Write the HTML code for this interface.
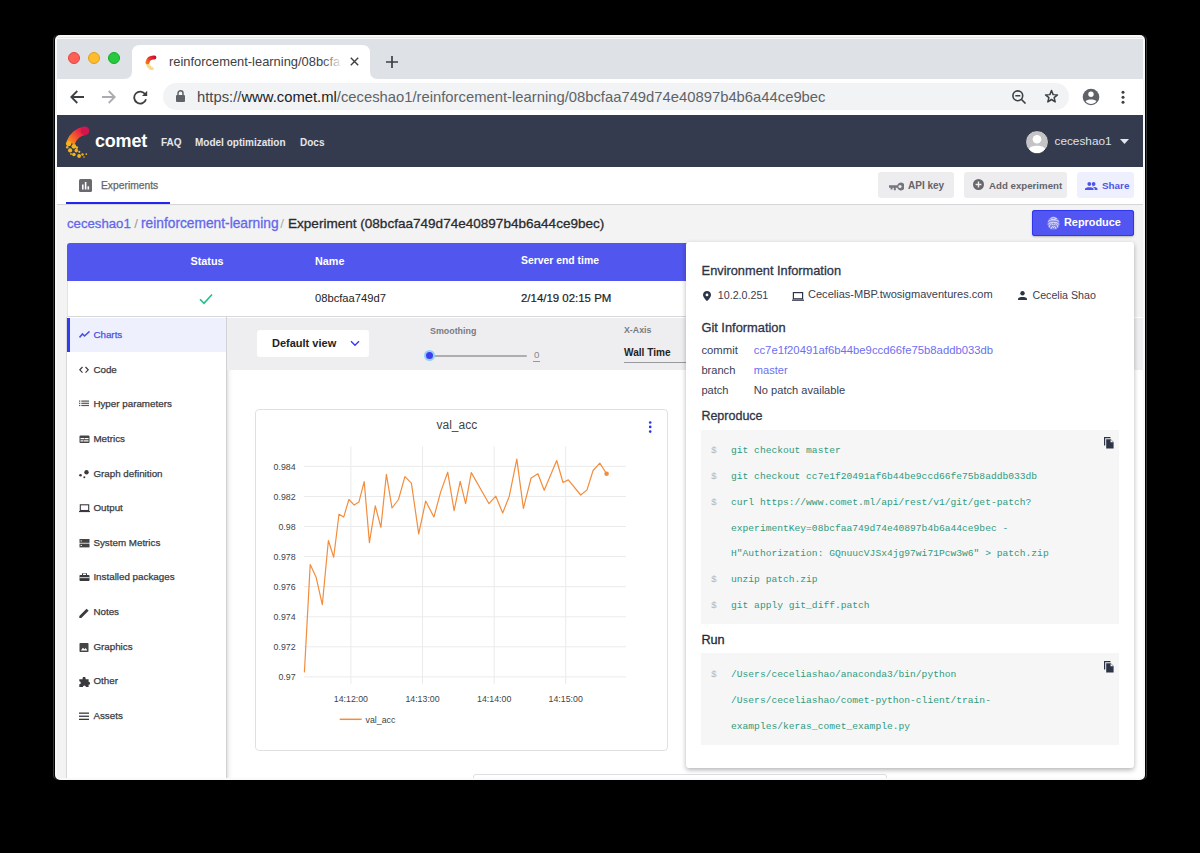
<!DOCTYPE html>
<html><head><meta charset="utf-8">
<style>
*{margin:0;padding:0;box-sizing:border-box}
html,body{width:1200px;height:853px;background:#000;overflow:hidden;font-family:"Liberation Sans",sans-serif}
.a{position:absolute}
#win{position:absolute;left:55px;top:35px;width:1090px;height:745px;border-radius:5px;overflow:hidden;background:#f3f3f4;border:2px solid #f8f9fa;box-shadow:-1px 0 0 0 #000,-2px 0 0 0 #363636,1px 0 0 0 #000,2px 0 0 0 #363636}
#pg{position:absolute;left:-57px;top:-37px;width:1200px;height:853px}
.t{position:absolute;white-space:nowrap;line-height:1}
</style></head>
<body>
<div id="win"><div id="pg">
  <!-- tab strip -->
  <div class="a" style="left:55px;top:35px;width:1090px;height:44px;background:#dee1e6"></div>
  <div class="a" style="left:55px;top:37px;width:1090px;height:2px;background:linear-gradient(#e6e6e6 0 50%,#fafafa 50%)"></div>
  <div class="a" style="left:68px;top:52px;width:12px;height:12px;border-radius:50%;background:#fe5f57;border:.5px solid #e2463f"></div>
  <div class="a" style="left:88px;top:52px;width:12px;height:12px;border-radius:50%;background:#febc2e;border:.5px solid #e1a116"></div>
  <div class="a" style="left:108px;top:52px;width:12px;height:12px;border-radius:50%;background:#28c840;border:.5px solid #14ae2a"></div>
  <svg class="a" style="left:124px;top:45px" width="254" height="34" viewBox="0 0 254 34"><path d="M0 34 Q8 34 8 26 L8 8 Q8 0 16 0 L238 0 Q246 0 246 8 L246 26 Q246 34 254 34 Z" fill="#fff"/></svg>
  <svg class="a" style="left:143px;top:53px" width="16" height="17" viewBox="0 0 16 17">
    <defs><linearGradient id="fg" gradientUnits="userSpaceOnUse" x1="12" y1="4" x2="4" y2="9"><stop offset="0" stop-color="#c8102e"/><stop offset=".5" stop-color="#ee2b2e"/><stop offset="1" stop-color="#f4721e"/></linearGradient></defs>
    <path d="M4.3 9.5 C5 14 7 15 9 15.8" stroke="#f8d67a" stroke-width="3.4" fill="none" stroke-linecap="round" opacity=".9"/>
    <circle cx="4.6" cy="9.6" r="1.4" fill="#f2ad1c"/>
    <path d="M11.4 4.5 C8 4.3 5.2 6 4.5 9.3" stroke="url(#fg)" stroke-width="4" fill="none" stroke-linecap="round"/>
  </svg>
  <div class="t" style="left:169px;top:55.9px;font-size:12.9px;color:#3c4043">reinforcement-learning/08bcfa</div>
  <div class="a" style="left:322px;top:50px;width:26px;height:22px;background:linear-gradient(90deg,rgba(255,255,255,0),#fff 80%)"></div>
  <svg class="a" style="left:350px;top:57px" width="9" height="9" viewBox="0 0 9 9"><path d="M.8 .8 L8.2 8.2 M8.2 .8 L.8 8.2" stroke="#3c4043" stroke-width="1.4"/></svg>
  <svg class="a" style="left:386px;top:56px" width="12" height="12" viewBox="0 0 12 12"><path d="M6 0 V12 M0 6 H12" stroke="#3c4043" stroke-width="1.7"/></svg>
  <!-- toolbar -->
  <div class="a" style="left:55px;top:79px;width:1090px;height:36px;background:#fff"></div>
  <svg class="a" style="left:70px;top:90px" width="14" height="14" viewBox="0 0 14 14"><path d="M14 7 H1.5 M7.3 1 L1.3 7 L7.3 13" stroke="#3c4043" stroke-width="1.8" fill="none"/></svg>
  <svg class="a" style="left:102px;top:90px" width="14" height="14" viewBox="0 0 14 14"><path d="M0 7 H12.5 M6.7 1 L12.7 7 L6.7 13" stroke="#a9acb0" stroke-width="1.8" fill="none"/></svg>
  <svg class="a" style="left:133px;top:90px" width="15" height="15" viewBox="0 0 15 15"><path d="M12.2 4.2 A6 6 0 1 0 13 9.2" stroke="#3c4043" stroke-width="1.8" fill="none"/><path d="M14.2 0.8 V6 H9 Z" fill="#3c4043"/></svg>
  <div class="a" style="left:163px;top:83px;width:906px;height:27px;background:#f1f3f4;border-radius:14px"></div>
  <svg class="a" style="left:176px;top:90px" width="9" height="12" viewBox="0 0 9 12"><path d="M2 5 V3.3 A2.5 2.5 0 0 1 7 3.3 V5" stroke="#5f6368" stroke-width="1.5" fill="none"/><rect x="0" y="5" width="9" height="7" rx="1" fill="#5f6368"/></svg>
  <div class="t" style="left:197px;top:90px;font-size:14.8px;color:#5f6368"><span style="color:#45494e">https://</span><span style="color:#202124">www.comet.ml</span>/ceceshao1/reinforcement-learning/08bcfaa749d74e40897b4b6a44ce9bec</div>
  <svg class="a" style="left:1012px;top:90px" width="15" height="14" viewBox="0 0 15 14"><circle cx="5.8" cy="5.8" r="4.9" stroke="#3c4043" stroke-width="1.6" fill="none"/><path d="M3.3 5.8 H8.3 M9.3 9.3 L13.5 13.5" stroke="#3c4043" stroke-width="1.6"/></svg>
  <svg class="a" style="left:1044px;top:89px" width="15" height="15" viewBox="0 0 24 24"><path d="M12 2.5 L14.6 9 L21.5 9.4 L16.2 13.8 L17.9 20.6 L12 16.8 L6.1 20.6 L7.8 13.8 L2.5 9.4 L9.4 9 Z" stroke="#3c4043" stroke-width="2.4" fill="none" stroke-linejoin="round"/></svg>
  <svg class="a" style="left:1082px;top:88px" width="18" height="18" viewBox="0 0 18 18"><circle cx="9" cy="9" r="8.3" fill="#5f6368"/><circle cx="9" cy="6.3" r="2.7" fill="#fff"/><path d="M3.6 13.2 C5 10.8 13 10.8 14.4 13.2 C13 15 11 16 9 16 C7 16 5 15 3.6 13.2Z" fill="#fff"/></svg>
  <svg class="a" style="left:1120px;top:90px" width="6" height="15" viewBox="0 0 6 15"><circle cx="3" cy="2.3" r="1.5" fill="#3c4043"/><circle cx="3" cy="7.2" r="1.5" fill="#3c4043"/><circle cx="3" cy="12.3" r="1.5" fill="#3c4043"/></svg>
  <!-- comet nav -->
  <div class="a" style="left:55px;top:115px;width:1090px;height:52px;background:#343b4e"></div>
  <svg class="a" style="left:64px;top:124px" width="30" height="36" viewBox="0 0 30 36">
    <defs><linearGradient id="lg" gradientUnits="userSpaceOnUse" x1="24" y1="5" x2="6" y2="20"><stop offset="0" stop-color="#d3154e"/><stop offset=".35" stop-color="#ee2741"/><stop offset=".75" stop-color="#f46a26"/><stop offset="1" stop-color="#f7951d"/></linearGradient></defs>
    <path d="M21 6.7 A18.5 18.5 0 0 0 6.6 19" stroke="url(#lg)" stroke-width="8.6" fill="none"/>
    <circle cx="21" cy="6.7" r="4.3" fill="#d3154e"/>
    <g fill="#f5b21c"><circle cx="4.6" cy="19.6" r="2.6"/><circle cx="9.9" cy="22.3" r="2.4"/><circle cx="6.1" cy="26.4" r="2.1"/><circle cx="3.2" cy="23.2" r="1.2"/><circle cx="12.3" cy="26.6" r="1.8"/><circle cx="12.8" cy="23.6" r="1.3"/><circle cx="9.9" cy="30.5" r="1.8"/><circle cx="15.1" cy="32" r="1.9"/><circle cx="15.3" cy="27.8" r="1.1"/><circle cx="18.5" cy="30.5" r="1.2"/><circle cx="22.3" cy="30.1" r="0.9"/><circle cx="7" cy="30" r="0.9"/><circle cx="20" cy="33" r="0.8"/></g>
  </svg>
  <div class="t" style="left:95px;top:132px;font-size:18px;font-weight:bold;color:#fff;letter-spacing:-0.2px">comet</div>
  <div class="t" style="left:161px;top:138px;font-size:10px;font-weight:bold;color:#e4e6ec">FAQ</div>
  <div class="t" style="left:195px;top:138px;font-size:10px;font-weight:bold;color:#e4e6ec">Model optimization</div>
  <div class="t" style="left:300px;top:138px;font-size:10px;font-weight:bold;color:#e4e6ec">Docs</div>
  <svg class="a" style="left:1025px;top:129.5px" width="24" height="24" viewBox="0 0 24 24"><circle cx="12" cy="12" r="11.5" fill="#c4c4c6" stroke="#262c3c" stroke-width="1"/><circle cx="12" cy="9.3" r="4.3" fill="#fff"/><path d="M4 19 C5 14.5 19 14.5 20 19 C18 22 15 23.3 12 23.3 C9 23.3 6 22 4 19Z" fill="#fff"/></svg>
  <div class="t" style="left:1054.5px;top:135.8px;font-size:11.8px;color:#dfe1e8">ceceshao1</div>
  <svg class="a" style="left:1120px;top:139px" width="9" height="5" viewBox="0 0 9 5"><path d="M0 0 H9 L4.5 5Z" fill="#e4e6ec"/></svg>
  <!-- tabs row -->
  <div class="a" style="left:55px;top:167px;width:1090px;height:38px;background:#fff;border-bottom:1px solid #d6d6d8"></div>
  <div class="a" style="left:66px;top:202px;width:104px;height:2px;background:#2525f0"></div>
  <svg class="a" style="left:79px;top:179px" width="13" height="13" viewBox="0 0 13 13"><rect width="13" height="13" rx="1.5" fill="#6a6a6e"/><rect x="3" y="5.5" width="1.6" height="5" fill="#fff"/><rect x="5.8" y="3" width="1.6" height="7.5" fill="#fff"/><rect x="8.5" y="7.3" width="1.6" height="3.2" fill="#fff"/></svg>
  <div class="t" style="left:101px;top:181px;font-size:10.3px;color:#66666a;-webkit-text-stroke:0.25px #66666a">Experiments</div>
  <!-- buttons -->
  <div class="a" style="left:878px;top:172px;width:76px;height:26px;background:#ededf0;border-radius:3px"></div>
  <svg class="a" style="left:888.5px;top:181.5px" width="15" height="9" viewBox="0 0 15 9"><path d="M0 3.2 H8.2 A3.9 3.9 0 1 1 8.2 5.8 H6.8 V8.3 H4.8 V5.8 H3.5 V7.5 H1.6 V5.8 H0Z" fill="#76767e"/><circle cx="11" cy="4.5" r="1.6" fill="#ededf0"/></svg>
  <div class="t" style="left:908px;top:181.1px;font-size:10px;font-weight:bold;color:#646469">API key</div>
  <div class="a" style="left:964px;top:172px;width:103px;height:26px;background:#ededf0;border-radius:3px"></div>
  <svg class="a" style="left:973px;top:179px" width="11" height="11" viewBox="0 0 11 11"><circle cx="5.5" cy="5.5" r="5.5" fill="#67676c"/><path d="M5.5 2.6 V8.4 M2.6 5.5 H8.4" stroke="#ededf0" stroke-width="1.4"/></svg>
  <div class="t" style="left:989px;top:181.1px;font-size:9.7px;font-weight:bold;color:#646469">Add experiment</div>
  <div class="a" style="left:1077px;top:172px;width:57px;height:26px;background:#eef0fe;border-radius:3px"></div>
  <svg class="a" style="left:1085px;top:181.5px" width="12.5" height="8" viewBox="0 0 12.5 8"><circle cx="4.3" cy="2" r="1.9" fill="#4e55e6"/><circle cx="8.6" cy="2" r="1.9" fill="#4e55e6"/><path d="M0 8 V6.8 C0 4.6 8.6 4.6 8.6 6.8 V8Z M6.8 4.7 C9 4.4 12.5 5.2 12.5 6.8 V8 H9.6 V6.8 C9.6 6 9 5.2 6.8 4.7Z" fill="#4e55e6"/></svg>
  <div class="t" style="left:1102px;top:181px;font-size:9.9px;font-weight:bold;color:#4e55e6">Share</div>
  <div class="a" style="left:1032px;top:210px;width:102px;height:26px;background:#5156f2;border-radius:3px;box-shadow:inset 0 0 0 1px #3035f0,0 1px 2px rgba(0,0,0,.25)"></div>
  <svg class="a" style="left:1046.5px;top:215.5px" width="13" height="14" viewBox="0 0 13 14"><ellipse cx="6.5" cy="7.2" rx="6" ry="6.6" fill="#a9acf8" opacity=".55"/><g stroke="#e2e3fd" stroke-width="1" fill="none" stroke-linecap="round">
<ellipse cx="6.5" cy="2.6" rx="2.6" ry="1"/>
<path d="M1.5 5.2 C3.5 3.3 9.5 3.3 11.5 5.2"/>
<path d="M1.2 8.2 C2 5.5 11 5.5 11.8 8.2"/>
<path d="M2.2 11 C2.5 7.5 5 7 6.5 9 C8 7 10.5 7.5 10.8 11"/>
<path d="M4 12.8 C4.5 10 6 9.5 6.5 12 C7 9.5 8.5 10 9 12.8"/></g></svg>
  <div class="t" style="left:1064px;top:216.9px;font-size:10.9px;font-weight:bold;color:#fff">Reproduce</div>
  <!-- breadcrumb -->
  <div class="t" style="left:67px;top:217.4px;font-size:13.2px;color:#6467ea;-webkit-text-stroke:0.3px #6467ea">ceceshao1</div>
  <div class="t" style="left:134.3px;top:217.3px;font-size:13.3px;color:#999">/</div>
  <div class="t" style="left:141px;top:216.9px;font-size:13.75px;color:#6467ea;-webkit-text-stroke:0.3px #6467ea">reinforcement-learning</div>
  <div class="t" style="left:280.3px;top:217.3px;font-size:13.3px;color:#aaa">/</div>
  <div class="t" style="left:288px;top:217.1px;font-size:13.55px;color:#2b2b2b;-webkit-text-stroke:0.3px #2b2b2b">Experiment (08bcfaa749d74e40897b4b6a44ce9bec)</div>
  <!-- table -->
  <div class="a" style="left:67px;top:243px;width:1067px;height:38px;background:#5156ef;border-radius:3px 3px 0 0"></div>
  <div class="t" style="left:190.5px;top:256.1px;font-size:10.8px;font-weight:bold;color:#fff">Status</div>
  <div class="t" style="left:315px;top:256.1px;font-size:10.8px;font-weight:bold;color:#fff">Name</div>
  <div class="t" style="left:521px;top:256.3px;font-size:10.4px;font-weight:bold;color:#fff">Server end time</div>
  <div class="a" style="left:67px;top:281px;width:1067px;height:36px;background:#fff;border-left:1px solid #e2e2e4;border-bottom:1px solid #d8d8da"></div>
  <svg class="a" style="left:199px;top:293px" width="14" height="12" viewBox="0 0 14 12"><path d="M1 6.3 L5 10.3 L13 1.5" stroke="#20c08c" stroke-width="1.6" fill="none"/></svg>
  <div class="t" style="left:315px;top:293.3px;font-size:11.2px;color:#222">08bcfaa749d7</div>
  <div class="t" style="left:521px;top:293.2px;font-size:11.45px;color:#222;-webkit-text-stroke:0.2px #222">2/14/19 02:15 PM</div>
  <!-- sidebar -->
  <div class="a" style="left:66px;top:317px;width:161px;height:470px;background:#fff;border-left:1px solid #d8d8da;border-right:1px solid #d2d2d4"></div>
  <div class="a" style="left:67px;top:318px;width:159px;height:34px;background:#eef0fd"></div>
  <div class="a" style="left:67px;top:318px;width:3px;height:34px;background:#2f3cf0"></div>
  <svg class="a" style="left:79px;top:331.2px" width="12" height="11" viewBox="0 0 12 11"><path d="M0.5 6.5 L3.5 3 L5.5 5 L10.5 0.5" stroke="#4a52e8" stroke-width="1.6" fill="none"/></svg>
  <div class="t" style="left:93.4px;top:330.20px;font-size:9.8px;color:#4a52e8;-webkit-text-stroke:0.25px #4a52e8">Charts</div>
  <svg class="a" style="left:79px;top:365.8px" width="12" height="11" viewBox="0 0 12 11"><path d="M3.5 1 L0.8 3.8 L3.5 6.6 M6.5 1 L9.2 3.8 L6.5 6.6" stroke="#3a3a3e" stroke-width="1.2" fill="none"/></svg>
  <div class="t" style="left:93.4px;top:364.80px;font-size:9.8px;color:#3a3a3e;-webkit-text-stroke:0.25px #3a3a3e">Code</div>
  <svg class="a" style="left:79px;top:400.4px" width="12" height="11" viewBox="0 0 12 11"><g fill="#555"><rect x="0" y="0.5" width="1.3" height="1.2"/><rect x="0" y="2.7" width="1.3" height="1.2"/><rect x="0" y="4.9" width="1.3" height="1.2"/><rect x="2.3" y="0.5" width="7.7" height="1.2"/><rect x="2.3" y="2.7" width="7.7" height="1.2"/><rect x="2.3" y="4.9" width="7.7" height="1.2"/></g></svg>
  <div class="t" style="left:93.4px;top:399.40px;font-size:9.8px;color:#3a3a3e;-webkit-text-stroke:0.25px #3a3a3e">Hyper parameters</div>
  <svg class="a" style="left:79px;top:435.0px" width="12" height="11" viewBox="0 0 12 11"><rect x="0.5" y="0.5" width="10" height="7.5" rx="1" fill="#444"/><rect x="1.5" y="3" width="4" height="1.2" fill="#fff"/><rect x="6" y="3" width="3.5" height="1.2" fill="#fff"/><rect x="1.5" y="5.3" width="2.5" height="1.2" fill="#fff"/><rect x="4.5" y="5.3" width="5" height="1.2" fill="#fff"/></svg>
  <div class="t" style="left:93.4px;top:434.00px;font-size:9.8px;color:#3a3a3e;-webkit-text-stroke:0.25px #3a3a3e">Metrics</div>
  <svg class="a" style="left:79px;top:469.6px" width="12" height="11" viewBox="0 0 12 11"><circle cx="1.5" cy="5.2" r="1.3" fill="#3a3a3e"/><circle cx="7.5" cy="2.3" r="2.2" fill="#3a3a3e"/><circle cx="5.3" cy="7.2" r="1" fill="#3a3a3e"/></svg>
  <div class="t" style="left:93.4px;top:468.60px;font-size:9.8px;color:#3a3a3e;-webkit-text-stroke:0.25px #3a3a3e">Graph definition</div>
  <svg class="a" style="left:79px;top:504.2px" width="12" height="11" viewBox="0 0 12 11"><rect x="1.3" y="0.8" width="8.4" height="5.7" fill="none" stroke="#3a3a3e" stroke-width="1.1"/><rect x="0" y="7" width="11" height="1.1" fill="#3a3a3e"/></svg>
  <div class="t" style="left:93.4px;top:503.20px;font-size:9.8px;color:#3a3a3e;-webkit-text-stroke:0.25px #3a3a3e">Output</div>
  <svg class="a" style="left:79px;top:538.8px" width="12" height="11" viewBox="0 0 12 11"><rect x="0.5" y="0" width="10" height="3.8" fill="#444"/><rect x="0.5" y="4.6" width="10" height="3.8" fill="#444"/><rect x="1.6" y="1.4" width="1.2" height="1" fill="#fff"/><rect x="1.6" y="6" width="1.2" height="1" fill="#fff"/></svg>
  <div class="t" style="left:93.4px;top:537.80px;font-size:9.8px;color:#3a3a3e;-webkit-text-stroke:0.25px #3a3a3e">System Metrics</div>
  <svg class="a" style="left:79px;top:573.4px" width="12" height="11" viewBox="0 0 12 11"><rect x="0.5" y="2" width="10" height="6" rx="0.8" fill="#3a3a3e"/><rect x="3.5" y="0" width="4" height="2.5" rx="0.5" fill="none" stroke="#3a3a3e" stroke-width="1"/><rect x="0.5" y="4.3" width="10" height="0.8" fill="#fff"/></svg>
  <div class="t" style="left:93.4px;top:572.40px;font-size:9.8px;color:#3a3a3e;-webkit-text-stroke:0.25px #3a3a3e">Installed packages</div>
  <svg class="a" style="left:79px;top:608.0px" width="12" height="11" viewBox="0 0 12 11"><path d="M0.3 10 L0.3 8 L7.6 0.7 L9.6 2.7 L2.3 10Z" fill="#3a3a3e"/></svg>
  <div class="t" style="left:93.4px;top:607.00px;font-size:9.8px;color:#3a3a3e;-webkit-text-stroke:0.25px #3a3a3e">Notes</div>
  <svg class="a" style="left:79px;top:642.6px" width="12" height="11" viewBox="0 0 12 11"><rect x="0.5" y="0" width="9" height="9" rx="0.8" fill="#444"/><path d="M1.8 7.5 L4 4.8 L5.5 6.3 L6.8 5 L8.3 7.5Z" fill="#fff"/></svg>
  <div class="t" style="left:93.4px;top:641.60px;font-size:9.8px;color:#3a3a3e;-webkit-text-stroke:0.25px #3a3a3e">Graphics</div>
  <svg class="a" style="left:79px;top:677.2px" width="12" height="11" viewBox="0 0 12 11"><path d="M3.6 1.3 A1.5 1.5 0 0 1 6.6 1.3 V2.2 H9.6 V4.8 A1.5 1.5 0 0 1 9.6 7.8 V10 H6.9 A1.5 1.5 0 0 0 3.9 10 H0.3 V7.2 A1.5 1.5 0 0 0 0.3 4.2 V2.2 H3.6Z" fill="#3a3a3e"/></svg>
  <div class="t" style="left:93.4px;top:676.20px;font-size:9.8px;color:#3a3a3e;-webkit-text-stroke:0.25px #3a3a3e">Other</div>
  <svg class="a" style="left:79px;top:711.8px" width="12" height="11" viewBox="0 0 12 11"><g fill="#3a3a3e"><rect x="0" y="0.5" width="10" height="1.3"/><rect x="0" y="3.6" width="10" height="1.3"/><rect x="0" y="6.7" width="10" height="1.3"/></g></svg>
  <div class="t" style="left:93.4px;top:710.80px;font-size:9.8px;color:#3a3a3e;-webkit-text-stroke:0.25px #3a3a3e">Assets</div>
  <!-- chart region -->
  <div class="a" style="left:227px;top:317px;width:920px;height:470px;background:#fff"></div>
  <div class="a" style="left:227px;top:369px;width:6px;height:420px;background:linear-gradient(90deg,#e0e0e0,#f6f6f6 35%,#fbfbfb 70%,#fff)"></div>
  <div class="a" style="left:227px;top:318px;width:920px;height:51.5px;background:#eeeef1"></div>
  <div class="a" style="left:257px;top:330px;width:112px;height:27px;background:#fff;border-radius:3px"></div>
  <div class="t" style="left:272px;top:337.6px;font-size:11px;font-weight:bold;color:#222">Default view</div>
  <svg class="a" style="left:350px;top:340px" width="10" height="7" viewBox="0 0 10 7"><path d="M1 1.2 L5 5.2 L9 1.2" stroke="#3a3af0" stroke-width="1.4" fill="none"/></svg>
  <div class="t" style="left:430px;top:326.8px;font-size:8.9px;font-weight:bold;color:#7a7a7e">Smoothing</div>
  <div class="a" style="left:429px;top:354.5px;width:98px;height:2px;background:#aeaeb2;border-radius:1px"></div>
  <div class="a" style="left:424px;top:350px;width:11px;height:11px;border-radius:50%;background:#8fd3fa"></div>
  <div class="a" style="left:426px;top:352px;width:7px;height:7px;border-radius:50%;background:#3e3ef0"></div>
  <div class="t" style="left:534px;top:350.3px;font-size:9.7px;color:#888">0</div>
  <div class="a" style="left:533px;top:361px;width:7px;height:1px;background:#999"></div>
  <div class="t" style="left:624px;top:326.3px;font-size:8.8px;font-weight:bold;color:#7a7a7e">X-Axis</div>
  <div class="t" style="left:624px;top:348px;font-size:10.1px;font-weight:bold;color:#222">Wall Time</div>
  <div class="a" style="left:624px;top:361.5px;width:70px;height:1px;background:#9a9a9e"></div>
  <svg class="a" style="left:255px;top:409px" width="413" height="342" viewBox="0 0 413 342" font-family="Liberation Sans" font-size="8.8" fill="#444">
    <rect x="0.5" y="0.5" width="412" height="341" rx="3.5" fill="#fff" stroke="#e0e0e2"/>
    <line x1="49.0" y1="57.4" x2="371.0" y2="57.4" stroke="#ebebeb" stroke-width="1"/>
    <text x="40.6" y="60.7" text-anchor="end">0.984</text>
    <line x1="49.0" y1="87.5" x2="371.0" y2="87.5" stroke="#ebebeb" stroke-width="1"/>
    <text x="40.6" y="90.8" text-anchor="end">0.982</text>
    <line x1="49.0" y1="117.5" x2="371.0" y2="117.5" stroke="#ebebeb" stroke-width="1"/>
    <text x="40.6" y="120.8" text-anchor="end">0.98</text>
    <line x1="49.0" y1="147.6" x2="371.0" y2="147.6" stroke="#ebebeb" stroke-width="1"/>
    <text x="40.6" y="150.9" text-anchor="end">0.978</text>
    <line x1="49.0" y1="177.7" x2="371.0" y2="177.7" stroke="#ebebeb" stroke-width="1"/>
    <text x="40.6" y="181.0" text-anchor="end">0.976</text>
    <line x1="49.0" y1="207.8" x2="371.0" y2="207.8" stroke="#ebebeb" stroke-width="1"/>
    <text x="40.6" y="211.1" text-anchor="end">0.974</text>
    <line x1="49.0" y1="237.8" x2="371.0" y2="237.8" stroke="#ebebeb" stroke-width="1"/>
    <text x="40.6" y="241.1" text-anchor="end">0.972</text>
    <line x1="49.0" y1="267.9" x2="371.0" y2="267.9" stroke="#ebebeb" stroke-width="1"/>
    <text x="40.6" y="271.2" text-anchor="end">0.97</text>
    <line x1="95.9" y1="37.5" x2="95.9" y2="275.0" stroke="#ebebeb" stroke-width="1"/>
    <text x="95.9" y="292.7" text-anchor="middle">14:12:00</text>
    <line x1="167.5" y1="37.5" x2="167.5" y2="275.0" stroke="#ebebeb" stroke-width="1"/>
    <text x="167.5" y="292.7" text-anchor="middle">14:13:00</text>
    <line x1="239.2" y1="37.5" x2="239.2" y2="275.0" stroke="#ebebeb" stroke-width="1"/>
    <text x="239.2" y="292.7" text-anchor="middle">14:14:00</text>
    <line x1="310.7" y1="37.5" x2="310.7" y2="275.0" stroke="#ebebeb" stroke-width="1"/>
    <text x="310.7" y="292.7" text-anchor="middle">14:15:00</text>
    <polyline points="49.4,263.4 55.2,155.6 61.1,168.2 67.3,195.7 73.4,131.5 78.7,148.2 84.0,105.2 88.7,108.1 93.9,90.5 99.2,96.1 103.9,93.1 109.2,72.6 114.4,133.6 120.3,96.9 125.9,118.3 131.4,65.3 137.0,99.0 143.5,90.5 149.9,67.6 156.4,74.1 163.7,124.8 170.7,92.0 178.9,108.1 185.7,82.9 192.7,63.2 199.1,101.6 205.2,72.4 210.6,94.7 216.3,63.6 234.0,94.7 240.8,87.2 247.7,104.0 254.3,87.2 261.8,50.1 268.4,99.3 276.1,69.0 282.9,64.7 289.2,81.3 301.7,51.5 308.0,73.5 313.3,70.9 325.7,86.0 332.0,80.9 338.1,61.5 344.8,54.1 351.6,64.7" fill="none" stroke="#f28d3e" stroke-width="1.2" stroke-linejoin="round"/>
    <circle cx="351.6" cy="64.7" r="2.3" fill="#f28d3e"/>
    <text x="201.8" y="19.6" text-anchor="middle" font-size="12" fill="#444">val_acc</text>
    <g fill="#2434e8"><circle cx="395.2" cy="13.5" r="1.3"/><circle cx="395.2" cy="17.9" r="1.3"/><circle cx="395.2" cy="22.6" r="1.3"/></g>
    <line x1="84.7" y1="310.3" x2="106.7" y2="310.3" stroke="#f28d3e" stroke-width="1.5"/>
    <text x="110.5" y="313.7" font-size="8.8">val_acc</text>
  </svg>
  <div class="a" style="left:473px;top:774px;width:414px;height:20px;background:#fff;border:1px solid #dedee0;border-radius:3px"></div>
  <!-- panel -->
  <div class="a" style="left:686px;top:242px;width:448px;height:526px;background:#fff;border-radius:3px;box-shadow:0 2px 5px rgba(0,0,0,.3)"></div>
  <div class="t" style="left:701.6px;top:265.06px;font-size:12.8px;color:#2e3447;-webkit-text-stroke:0.3px #2e3447">Environment Information</div>
  <svg class="a" style="left:703px;top:291px" width="8" height="10" viewBox="0 0 8 10"><path d="M4 0 C1.8 0 0 1.7 0 3.9 C0 6.6 4 10 4 10 C4 10 8 6.6 8 3.9 C8 1.7 6.2 0 4 0Z" fill="#2e3447"/><circle cx="4" cy="3.9" r="1.4" fill="#fff"/></svg>
  <div class="t" style="left:717.8px;top:289.74px;font-size:10.7px;color:#3a4052">10.2.0.251</div>
  <svg class="a" style="left:792px;top:292px" width="12" height="9" viewBox="0 0 12 9"><rect x="1.4" y="0.6" width="9.2" height="6.2" fill="none" stroke="#2e3447" stroke-width="1.2"/><rect x="0" y="7.6" width="12" height="1.2" fill="#2e3447"/></svg>
  <div class="t" style="left:808.0px;top:289.45px;font-size:11.05px;color:#3a4052">Cecelias-MBP.twosigmaventures.com</div>
  <svg class="a" style="left:1017.5px;top:291px" width="9" height="9" viewBox="0 0 9 9"><circle cx="4.5" cy="2.2" r="2.2" fill="#2e3447"/><path d="M0 9 V7.6 C0 5.4 9 5.4 9 7.6 V9Z" fill="#2e3447"/></svg>
  <div class="t" style="left:1032.5px;top:289.78px;font-size:10.65px;color:#3a4052">Cecelia Shao</div>
  <div class="t" style="left:701.4px;top:321.62px;font-size:12.85px;color:#2e3447;-webkit-text-stroke:0.3px #2e3447">Git Information</div>
  <div class="t" style="left:701.4px;top:344.73px;font-size:11.3px;color:#3a4052">commit</div>
  <div class="t" style="left:753.8px;top:344.73px;font-size:11.3px;color:#6b6ff0">cc7e1f20491af6b44be9ccd66fe75b8addb033db</div>
  <div class="t" style="left:701.4px;top:364.90px;font-size:11.1px;color:#3a4052">branch</div>
  <div class="t" style="left:753.8px;top:364.90px;font-size:11.1px;color:#6b6ff0">master</div>
  <div class="t" style="left:701.4px;top:384.70px;font-size:11.1px;color:#3a4052">patch</div>
  <div class="t" style="left:753.8px;top:384.70px;font-size:11.1px;color:#3a4052">No patch available</div>
  <div class="t" style="left:701.4px;top:409.72px;font-size:12.5px;color:#2e3447;-webkit-text-stroke:0.3px #2e3447">Reproduce</div>
  <div class="a" style="left:701px;top:430px;width:418px;height:194px;background:#f6f6f6"></div>
  <svg class="a" style="left:1104px;top:437px" width="10" height="12" viewBox="0 0 10 12"><path d="M0.6 8.5 V0.6 H6.5" stroke="#2e3447" stroke-width="1.2" fill="none"/><path d="M2.2 2.2 H6.8 L9.6 5 V11.6 H2.2Z" fill="#2e3447"/><path d="M6.6 2.4 V5.2 H9.4" fill="#f6f6f6"/></svg>
  <div class="t" style="left:711.0px;top:446.42px;font-size:9.63px;color:#b4b4b4;font-family:'Liberation Mono',monospace">$</div>
  <div class="t" style="left:731.0px;top:446.42px;font-size:9.63px;color:#2f9a80;font-family:'Liberation Mono',monospace">git checkout master</div>
  <div class="t" style="left:711.0px;top:472.17px;font-size:9.63px;color:#b4b4b4;font-family:'Liberation Mono',monospace">$</div>
  <div class="t" style="left:731.0px;top:472.17px;font-size:9.63px;color:#2f9a80;font-family:'Liberation Mono',monospace">git checkout cc7e1f20491af6b44be9ccd66fe75b8addb033db</div>
  <div class="t" style="left:711.0px;top:497.92px;font-size:9.63px;color:#b4b4b4;font-family:'Liberation Mono',monospace">$</div>
  <div class="t" style="left:731.0px;top:497.92px;font-size:9.63px;color:#2f9a80;font-family:'Liberation Mono',monospace">curl https://www.comet.ml/api/rest/v1/git/get-patch?</div>
  <div class="t" style="left:731.0px;top:523.67px;font-size:9.63px;color:#2f9a80;font-family:'Liberation Mono',monospace">experimentKey=08bcfaa749d74e40897b4b6a44ce9bec -</div>
  <div class="t" style="left:731.0px;top:549.42px;font-size:9.63px;color:#2f9a80;font-family:'Liberation Mono',monospace">H"Authorization: GQnuucVJSx4jg97wi71Pcw3w6" &gt; patch.zip</div>
  <div class="t" style="left:711.0px;top:575.17px;font-size:9.63px;color:#b4b4b4;font-family:'Liberation Mono',monospace">$</div>
  <div class="t" style="left:731.0px;top:575.17px;font-size:9.63px;color:#2f9a80;font-family:'Liberation Mono',monospace">unzip patch.zip</div>
  <div class="t" style="left:711.0px;top:600.92px;font-size:9.63px;color:#b4b4b4;font-family:'Liberation Mono',monospace">$</div>
  <div class="t" style="left:731.0px;top:600.92px;font-size:9.63px;color:#2f9a80;font-family:'Liberation Mono',monospace">git apply git_diff.patch</div>
  <div class="t" style="left:701.4px;top:633.55px;font-size:12.7px;color:#22283a;-webkit-text-stroke:0.3px #22283a">Run</div>
  <div class="a" style="left:701px;top:653px;width:418px;height:92px;background:#f6f6f6"></div>
  <svg class="a" style="left:1104px;top:661px" width="10" height="12" viewBox="0 0 10 12"><path d="M0.6 8.5 V0.6 H6.5" stroke="#2e3447" stroke-width="1.2" fill="none"/><path d="M2.2 2.2 H6.8 L9.6 5 V11.6 H2.2Z" fill="#2e3447"/><path d="M6.6 2.4 V5.2 H9.4" fill="#f6f6f6"/></svg>
  <div class="t" style="left:711.0px;top:669.92px;font-size:9.63px;color:#b4b4b4;font-family:'Liberation Mono',monospace">$</div>
  <div class="t" style="left:731.0px;top:669.92px;font-size:9.63px;color:#2f9a80;font-family:'Liberation Mono',monospace">/Users/ceceliashao/anaconda3/bin/python</div>
  <div class="t" style="left:731.0px;top:695.72px;font-size:9.63px;color:#2f9a80;font-family:'Liberation Mono',monospace">/Users/ceceliashao/comet-python-client/train-</div>
  <div class="t" style="left:731.0px;top:721.52px;font-size:9.63px;color:#2f9a80;font-family:'Liberation Mono',monospace">examples/keras_comet_example.py</div>
</div></div>
</body></html>
